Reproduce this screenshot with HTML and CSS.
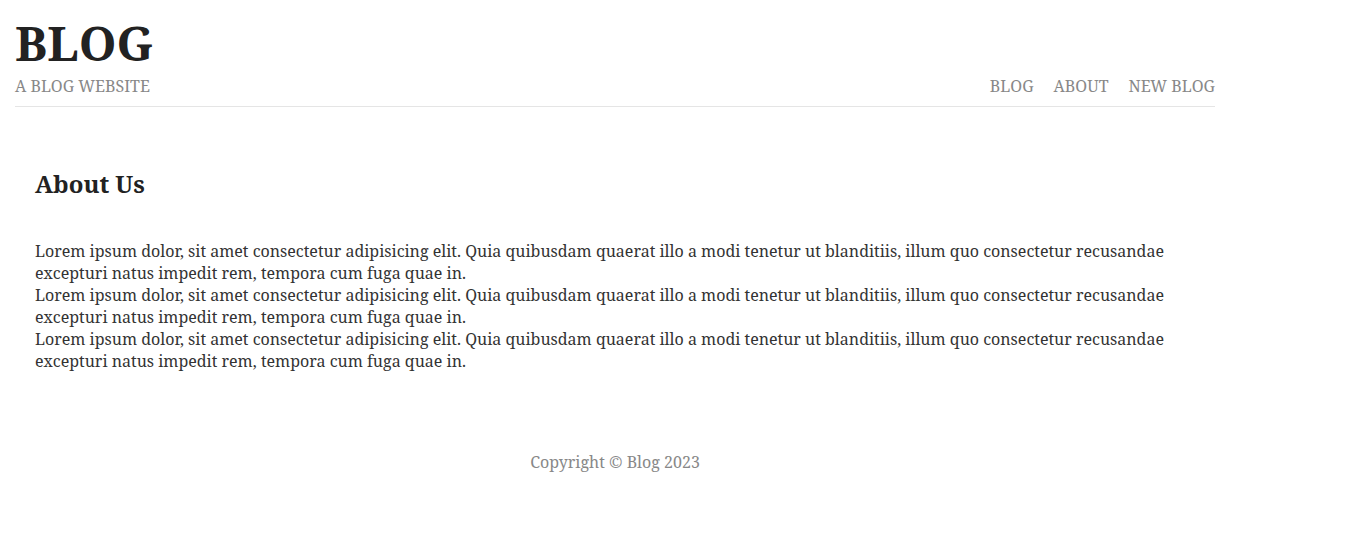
FILE: index.html
```html
<!DOCTYPE html>
<html lang="en">
<head>
<meta charset="utf-8">
<title>Blog - About</title>
<link rel="stylesheet" href="styles.css">
</head>
<body>
<div class="page">
  <header class="site-header">
    <div class="brand">
      <h1 class="brand-title">BLOG</h1>
      <div class="brand-tagline">A BLOG WEBSITE</div>
    </div>
    <nav class="site-nav">
      <a href="#">BLOG</a>
      <a href="#">ABOUT</a>
      <a href="#">NEW BLOG</a>
    </nav>
  </header>
  <main class="content">
    <h2 class="page-title">About Us</h2>
    <p class="about-text">Lorem ipsum dolor, sit amet consectetur adipisicing elit. Quia quibusdam quaerat illo a modi tenetur ut blanditiis, illum quo consectetur recusandae excepturi natus impedit rem, tempora cum fuga quae in.<br>Lorem ipsum dolor, sit amet consectetur adipisicing elit. Quia quibusdam quaerat illo a modi tenetur ut blanditiis, illum quo consectetur recusandae excepturi natus impedit rem, tempora cum fuga quae in.<br>Lorem ipsum dolor, sit amet consectetur adipisicing elit. Quia quibusdam quaerat illo a modi tenetur ut blanditiis, illum quo consectetur recusandae excepturi natus impedit rem, tempora cum fuga quae in.</p>
  </main>
  <footer class="site-footer">Copyright © Blog 2023</footer>
</div>
</body>
</html>
```

FILE: styles.css
```css
html, body {
  margin: 0;
  padding: 0;
  background: #ffffff;
}
body {
  font-family: "Noto Serif", "Droid Serif", "DejaVu Serif", serif;
  color: #333333;
}
.page {
  width: 1200px;
  margin-left: 15px;
}
.site-header {
  display: flex;
  justify-content: space-between;
  align-items: flex-end;
  padding-top: 15px;
  padding-bottom: 10px;
  border-bottom: 1px solid #e5e5e5;
}
.brand-title {
  margin: 0;
  font-size: 48px;
  line-height: 56px;
  font-weight: 700;
  color: #222222;
}
.brand-tagline {
  margin-top: 5px;
  font-size: 16px;
  line-height: 20px;
  color: #888888;
}
.site-nav {
  display: flex;
  gap: 20px;
}
.site-nav a {
  font-size: 16px;
  line-height: 20px;
  color: #888888;
  text-decoration: none;
}
.content {
  padding: 0 20px;
}
.page-title {
  margin: 62px 0 0;
  font-size: 24px;
  line-height: 30px;
  font-weight: 700;
  color: #222222;
}
.about-text {
  margin: 41px 0 0;
  font-size: 16px;
  line-height: 22px;
  color: #333333;
}
.site-footer {
  margin-top: 79px;
  text-align: center;
  font-size: 16px;
  line-height: 22px;
  color: #888888;
}
```
